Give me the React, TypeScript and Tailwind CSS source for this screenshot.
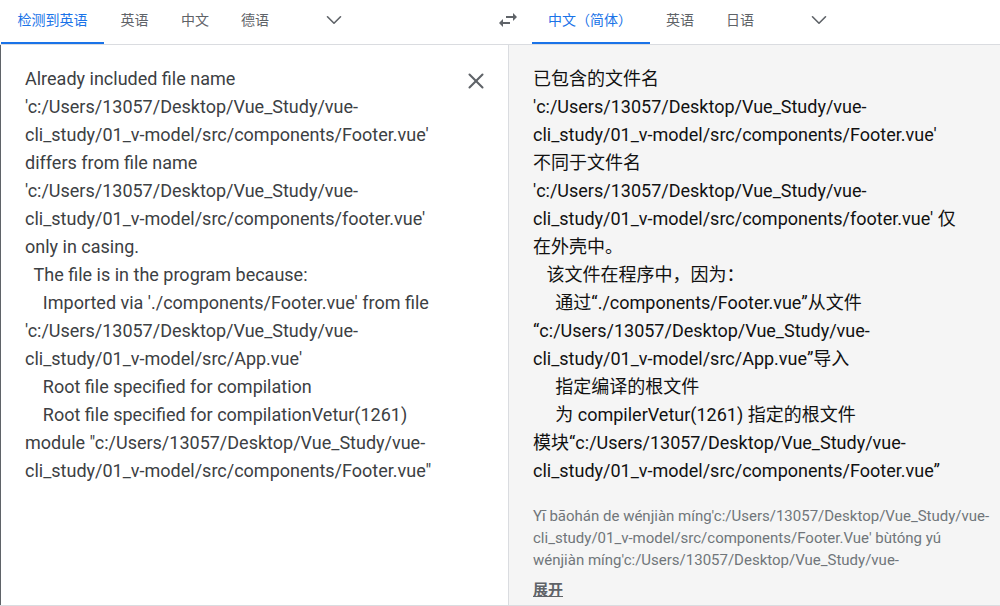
import { ChevronDown, X } from "lucide-react";

const font = "font-['Roboto','Noto_Sans_CJK_SC',sans-serif]";

const sourceLines = `Already included file name
'c:/Users/13057/Desktop/Vue_Study/vue-
cli_study/01_v-model/src/components/Footer.vue'
differs from file name
'c:/Users/13057/Desktop/Vue_Study/vue-
cli_study/01_v-model/src/components/footer.vue'
only in casing.
  The file is in the program because:
    Imported via './components/Footer.vue' from file
'c:/Users/13057/Desktop/Vue_Study/vue-
cli_study/01_v-model/src/App.vue'
    Root file specified for compilation
    Root file specified for compilationVetur(1261)
module "c:/Users/13057/Desktop/Vue_Study/vue-
cli_study/01_v-model/src/components/Footer.vue"`;

const targetLines = `已包含的文件名
'c:/Users/13057/Desktop/Vue_Study/vue-
cli_study/01_v-model/src/components/Footer.vue'
不同于文件名
'c:/Users/13057/Desktop/Vue_Study/vue-
cli_study/01_v-model/src/components/footer.vue' 仅
在外壳中。
   该文件在程序中，因为：
     通过“./components/Footer.vue”从文件
“c:/Users/13057/Desktop/Vue_Study/vue-
cli_study/01_v-model/src/App.vue”导入
     指定编译的根文件
     为 compilerVetur(1261) 指定的根文件
模块“c:/Users/13057/Desktop/Vue_Study/vue-
cli_study/01_v-model/src/components/Footer.vue”`;

const romanized = `Yī bāohán de wénjiàn míng'c:/Users/13057/Desktop/Vue_Study/vue-
cli_study/01_v-model/src/components/Footer.Vue' bùtóng yú
wénjiàn míng'c:/Users/13057/Desktop/Vue_Study/vue-`;

function Tab({ label, active, className }: { label: string; active?: boolean; className: string }) {
  return (
    <div
      className={`flex h-[44px] items-center justify-center border-b-2 pb-[2px] text-sm ${className} ${
        active ? "border-[#1a73e8] text-[#1a73e8]" : "border-transparent text-[#5f6368]"
      }`}
    >
      {label}
    </div>
  );
}

export default function App() {
  return (
    <div className={`${font} flex h-[606px] w-[1000px] flex-col overflow-hidden bg-white`}>
      <div className="flex h-[45px] shrink-0 border-b border-[#dadce0]">
        <div className="flex w-[489px] shrink-0 pl-px">
          <Tab label="检测到英语" active className="w-[103px]" />
          <Tab label="英语" className="w-[61px]" />
          <Tab label="中文" className="w-[60px]" />
          <Tab label="德语" className="w-[60px]" />
          <div className="flex h-[40px] w-[98px] items-center justify-center text-[#5f6368]">
            <ChevronDown size={26} strokeWidth={1.5} />
          </div>
        </div>
        <div className="mr-[5px] flex h-[40px] w-[38px] shrink-0 items-center justify-center text-[#5f6368]">
          <svg width="24" height="24" viewBox="0 0 24 24" fill="currentColor">
            <path d="M6.99 11 3 15l3.99 4v-3H14v-2H6.99v-3zM21 9l-3.99-4v3H10v2h7.01v3L21 9z" />
          </svg>
        </div>
        <div className="flex">
          <Tab label="中文（简体）" active className="w-[118px] pr-[2px]" />
          <Tab label="英语" className="w-[60px]" />
          <Tab label="日语" className="w-[60px]" />
          <div className="flex h-[40px] w-[98px] items-center justify-center text-[#5f6368]">
            <ChevronDown size={26} strokeWidth={1.5} />
          </div>
        </div>
      </div>

      <div className="flex min-h-0 flex-1 border-b border-[#dadce0]">
        <div className="relative w-[508px] shrink-0 border-l border-[#5f6368] pl-[24px] pt-[20px]">
          <p className="whitespace-pre text-[18px] leading-[28px] text-[#3c4043]">{sourceLines}</p>
          <X size={26} strokeWidth={1.9} className="absolute left-[462px] top-[23px] text-[#5f6368]" />
        </div>
        <div className="flex-1 border-l border-[#dadce0] bg-[#f5f5f5] pl-[24px] pt-[20px]">
          <p className="whitespace-pre text-[18px] leading-[28px] text-[#111111]">{targetLines}</p>
          <p className="mt-[20px] whitespace-pre text-[15px] leading-[22px] text-[#70757a]">{romanized}</p>
          <p className="mt-[8px] text-[15px] font-bold leading-[22px] text-[#5f6368] underline">展开</p>
        </div>
      </div>
    </div>
  );
}
